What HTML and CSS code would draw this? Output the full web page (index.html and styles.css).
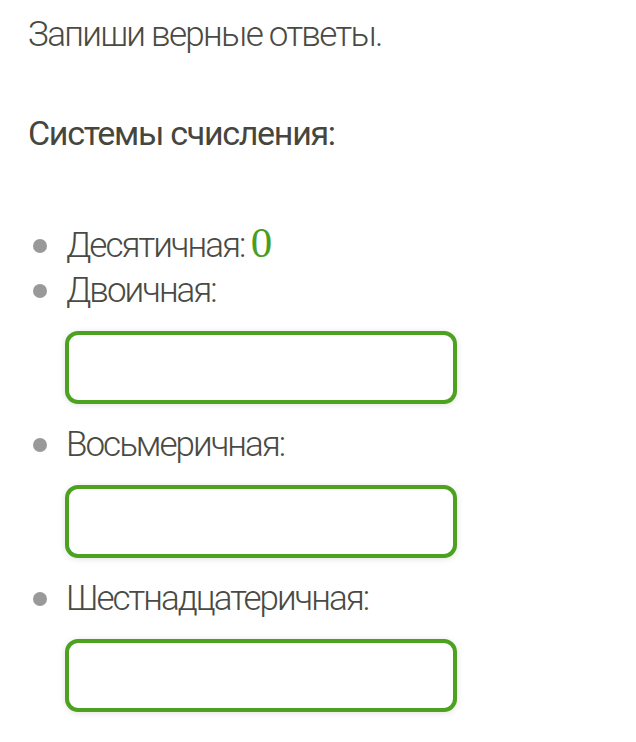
FILE: index.html
```html
<!DOCTYPE html>
<html lang="ru">
<head>
  <meta charset="UTF-8" />
  <meta name="viewport" content="width=device-width, initial-scale=1.0" />
  <title>Системы счисления</title>
  <link rel="stylesheet" href="styles.css">
</head>
<body>
  <main class="task">
    <p class="intro">Запиши верные ответы.</p>
    <h2 class="title">Системы счисления:</h2>

    <ul class="answers">
      <li>Десятичная: <span class="given">0</span></li>
      <li>Двоичная:
        <input class="field" type="text" aria-label="Двоичная" />
      </li>
      <li>Восьмеричная:
        <input class="field" type="text" aria-label="Восьмеричная" />
      </li>
      <li>Шестнадцатеричная:
        <input class="field" type="text" aria-label="Шестнадцатеричная" />
      </li>
    </ul>
  </main>
</body>
</html>
```

FILE: styles.css
```css
body {
  margin: 0;
  background: #fff;
  font-family: Roboto, 'Noto Sans', sans-serif;
  color: #4a4a44;
}

.task {
  padding: 11px 0 0 28px;
}

.intro {
  margin: 0;
  font-size: 35px;
  font-weight: 300;
  line-height: 48px;
  letter-spacing: -1.7px;
}

.title {
  margin: 50px 0 0;
  font-size: 34px;
  font-weight: 400;
  line-height: 48px;
  letter-spacing: -1.3px;
  color: #46463e;
}

.answers {
  list-style: none;
  margin: 66px 0 0;
  padding: 0;
}

.answers li {
  position: relative;
  padding-left: 38px;
  font-size: 35px;
  font-weight: 300;
  line-height: 45px;
  letter-spacing: -2px;
}

.answers li::before {
  content: "";
  position: absolute;
  left: 5px;
  top: 16px;
  width: 14px;
  height: 14px;
  border-radius: 50%;
  background: #999;
}

.given {
  font-family: 'Liberation Serif', serif;
  font-size: 43px;
  line-height: 40px;
  color: #4a9e1f;
  letter-spacing: 0;
}

.field {
  display: block;
  box-sizing: border-box;
  width: 392px;
  height: 73px;
  margin: 18px 0 18px -1px;
  border: 4px solid #4ca11f;
  border-radius: 13px;
  background: #fff;
  box-shadow: 0 1px 6px rgba(0, 0, 0, 0.12);
  outline: none;
}
```
